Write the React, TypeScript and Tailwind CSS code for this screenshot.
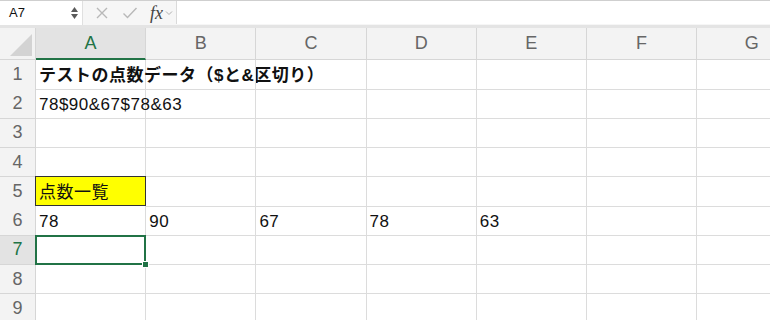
import { ReactNode } from 'react';

const COLS = ['A', 'B', 'C', 'D', 'E', 'F', 'G'];

type Cell = { text?: string; bold?: boolean; yellow?: boolean; selected?: boolean };

const rows: Cell[][] = [
  [{ text: 'テストの点数データ（$と&区切り）', bold: true }],
  [{ text: '78$90&67$78&63' }],
  [],
  [],
  [{ text: '点数一覧', yellow: true }],
  [{ text: '78' }, { text: '90' }, { text: '67' }, { text: '78' }, { text: '63' }],
  [{ selected: true }],
  [],
  [],
];

function GridCell({ cell }: { cell?: Cell }) {
  const c = cell || {};
  let content: ReactNode = null;
  if (c.text) {
    content = (
      <span className={`whitespace-nowrap tracking-[0.5px] ${c.bold ? 'font-bold' : ''}`}>
        {c.text}
      </span>
    );
  }
  return (
    <div
      className={`relative h-full border-b border-r border-[#dcdcdc] flex items-center pl-[3px] pt-[3px] overflow-visible ${
        c.yellow ? 'bg-[#ffff00] !border-[#333] border-l border-t -mt-px -ml-px z-[1]' : ''
      } ${c.selected ? 'z-10' : ''}`}
    >
      {content}
      {c.selected && (
        <div className="absolute left-[-1px] top-[-1px] right-[-1px] bottom-[-1px] border-2 border-[#217346]">
          <div className="absolute right-[-5px] bottom-[-5px] w-[7px] h-[7px] bg-[#217346] border border-white" />
        </div>
      )}
    </div>
  );
}

export default function App() {
  return (
    <div
      className="w-[770px] h-[320px] overflow-hidden bg-white text-[#111]"
      style={{ fontFamily: '"Liberation Sans", "Noto Sans CJK JP", sans-serif' }}
    >
      {/* formula bar */}
      <div className="h-[28px] flex bg-[#f6f6f6] border-t border-[#cfcfcf] border-b-[3px] border-b-[#e4e4e4]">
        <div className="w-[83px] h-[24px] bg-white flex items-center justify-between pl-[9px] pr-[4px] border-r border-[#e0e0e0]">
          <span className="text-[13px]">A7</span>
          <div className="flex flex-col items-center gap-[2px] text-[#555]">
            <svg width="7" height="5" viewBox="0 0 7 5"><path d="M3.5 0L7 5H0z" fill="#5a5a5a" /></svg>
            <svg width="7" height="5" viewBox="0 0 7 5"><path d="M0 0h7L3.5 5z" fill="#5a5a5a" /></svg>
          </div>
        </div>
        <div className="w-[93px] flex items-center pl-[12px] gap-[13px]">
          <svg width="14" height="14" viewBox="0 0 14 14">
            <path d="M2 2l10 10M12 2L2 12" stroke="#b8b8b8" strokeWidth="1.4" />
          </svg>
          <svg width="16" height="14" viewBox="0 0 16 14">
            <path d="M1.5 7.5l4 4L14.5 2" stroke="#b8b8b8" strokeWidth="1.4" fill="none" />
          </svg>
          <div className="flex items-center gap-[2px] -ml-[1px]">
            <span
              className="italic text-[18px] text-[#444] leading-none"
              style={{ fontFamily: '"Liberation Serif", serif' }}
            >
              fx
            </span>
            <svg width="8" height="6" viewBox="0 0 8 6">
              <path d="M1 1.5l3 3 3-3" stroke="#b0b0b0" strokeWidth="1" fill="none" />
            </svg>
          </div>
        </div>
        <div className="flex-1 h-[23px] bg-white border-l border-[#dadada]" />
      </div>

      {/* column header */}
      <div className="grid grid-cols-[36px_repeat(7,110.2px)] h-[32px] bg-[#f3f3f3]">
        <div className="relative border-r border-b border-[#d6d6d6]">
          <svg className="absolute right-[3px] bottom-[3px]" width="22" height="22" viewBox="0 0 22 22">
            <path d="M22 0V22H0z" fill="#d3d3d3" />
          </svg>
        </div>
        {COLS.map((c) => (
          <div
            key={c}
            className={`flex items-center justify-center text-[18px] border-r border-[#d6d6d6] ${
              c === 'A'
                ? 'bg-[#e3e3e3] text-[#217346] border-b-2 border-b-[#217346]'
                : 'text-[#666] border-b border-b-[#d6d6d6]'
            }`}
          >
            {c}
          </div>
        ))}
      </div>

      {/* rows */}
      {rows.map((r, i) => {
        const selected = i === 6;
        return (
          <div
            key={i}
            className={`relative grid grid-cols-[36px_repeat(7,110.2px)] h-[29.3px] text-[17px] ${
              selected ? 'z-10' : ''
            }`}
          >
            <div
              className={`flex items-center justify-center text-[18px] border-r border-b border-[#d6d6d6] ${
                selected ? 'bg-[#e3e3e3] text-[#217346]' : 'bg-[#f3f3f3] text-[#666]'
              }`}
            >
              {i + 1}
            </div>
            {COLS.map((c, j) => (
              <GridCell key={c} cell={r[j]} />
            ))}
          </div>
        );
      })}
    </div>
  );
}
